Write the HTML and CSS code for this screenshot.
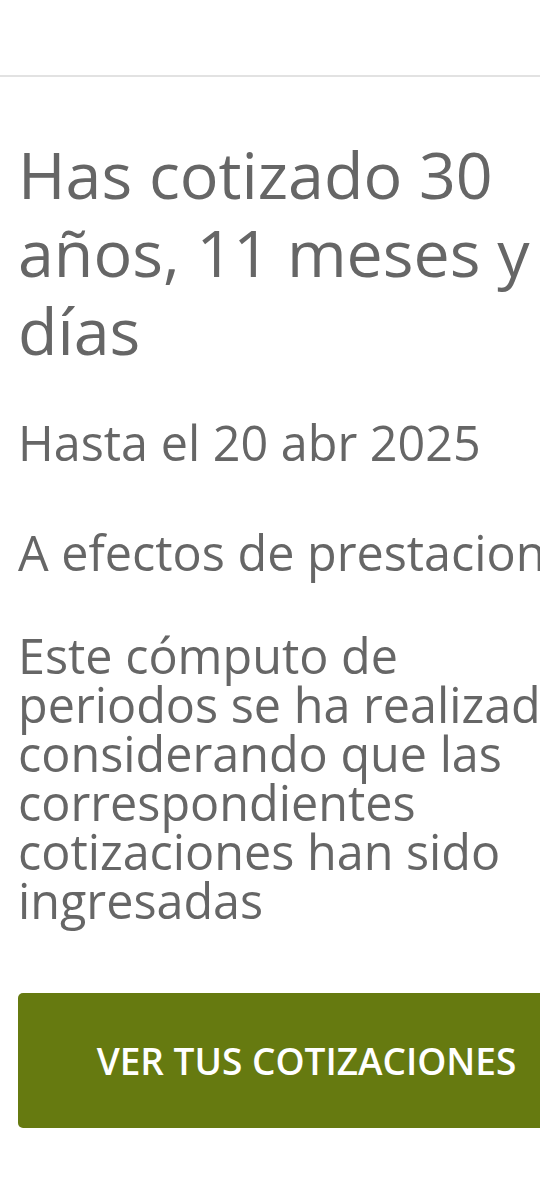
FILE: index.html
```html
<!DOCTYPE html>
<html lang="es">
<head>
<meta charset="utf-8">
<title>Cotizaciones</title>
<link rel="stylesheet" href="styles.css">
</head>
<body>
<div class="page">
  <header class="topbar"></header>
  <main class="content">
    <h1 class="title">Has cotizado 30 años, 11 meses y 9 días</h1>
    <p class="until">Hasta el 20 abr 2025</p>
    <p class="note">A efectos de prestaciones</p>
    <p class="desc">Este cómputo de periodos se ha realizado considerando que las correspondientes cotizaciones han sido ingresadas</p>
    <button class="cta" type="button">VER TUS COTIZACIONES</button>
  </main>
</div>
</body>
</html>
```

FILE: styles.css
```css
html, body {
  margin: 0;
  padding: 0;
  background: #ffffff;
  overflow: hidden;
}

.page {
  width: 613px;
  font-family: "Open Sans", "DejaVu Sans", sans-serif;
  color: #666666;
}

.topbar {
  height: 75px;
  border-bottom: 2px solid #e2e2e2;
}

.content {
  padding: 0 18px;
  display: flex;
  flex-direction: column;
}

.title {
  margin: 58px 0 0;
  font-size: 64.5px;
  font-weight: 400;
  line-height: 78px;
}

.until {
  margin: 44px 0 0;
  font-size: 48.5px;
  line-height: 58px;
}

.note {
  margin: 52px 0 0;
  font-size: 48.5px;
  line-height: 58px;
  white-space: nowrap;
}

.desc {
  margin: 50px 0 0;
  font-size: 48.5px;
  line-height: 49px;
}

.cta {
  margin-top: 68px;
  height: 135px;
  border: none;
  border-radius: 5px;
  background: #667a10;
  color: #ffffff;
  font-family: "Open Sans", "DejaVu Sans", sans-serif;
  font-size: 37px;
  font-weight: 600;
  padding: 0;
}
```
